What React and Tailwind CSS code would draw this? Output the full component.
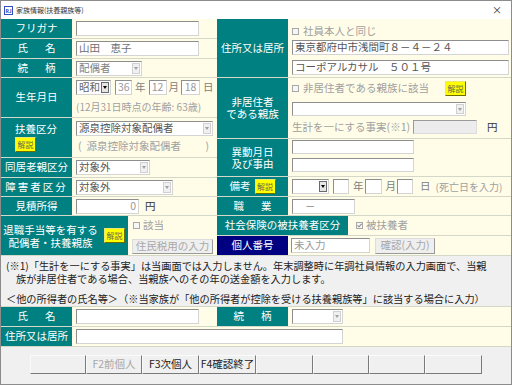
import React from 'react';

const ROW = 'border-b border-[#d3d8c8]';
const CREAM = 'bg-[#fffde8]';

function Lbl({ className = '', bg = 'bg-[#008080]', lead = 'leading-none', children }) {
  return (
    <div className={`${bg} ${lead} text-white text-[10.5px] flex items-center justify-center shrink-0 whitespace-nowrap ${className}`}>
      {children}
    </div>
  );
}

function Spaced({ a, b }) {
  return (
    <span className="w-[38px] flex justify-between">
      <span>{a}</span>
      <span>{b}</span>
    </span>
  );
}

function Inp({ className = '', h = 'h-[15px]', textClass = 'text-[#555]', children }) {
  return (
    <div className={`${h} shrink-0 bg-white border border-t-[#8e8e8e] border-l-[#8e8e8e] border-r-[#d4d4d4] border-b-[#d4d4d4] text-[10.5px] leading-none flex items-center px-[2px] whitespace-nowrap ${textClass} ${className}`}>
      {children}
    </div>
  );
}

function Sel({ className = '', h = 'h-[15px]', dark = false, textClass = 'text-[#555]', children }) {
  return (
    <div className={`${h} shrink-0 bg-white border border-t-[#8e8e8e] border-l-[#8e8e8e] border-r-[#d4d4d4] border-b-[#d4d4d4] flex items-stretch ${className}`}>
      <div className={`flex-1 text-[10.5px] leading-none flex items-center pl-[2px] whitespace-nowrap ${textClass}`}>{children}</div>
      <div className={`w-[8px] my-[1px] mr-[1px] flex items-center justify-center ${dark ? 'bg-[#e6e6e6] border border-[#6a6a6a]' : 'bg-[#f0f0f0] border border-[#d0d0d0]'}`}>
        <div className={`w-0 h-0 border-l-[2px] border-r-[2px] border-t-[3px] border-l-transparent border-r-transparent ${dark ? 'border-t-black' : 'border-t-[#a0a0a0]'}`} />
      </div>
    </div>
  );
}

function Kai({ className = '' }) {
  return (
    <div className={`w-[21px] h-[15px] shrink-0 bg-[#ffff00] border border-t-[#e8e870] border-l-[#e8e870] border-r-[#6e6e00] border-b-[#6e6e00] text-[8px] leading-none text-[#6a6a50] flex items-center justify-center ${className}`}>
      解説
    </div>
  );
}

function Chk({ checked = false }) {
  return (
    <span className="w-[7px] h-[7px] shrink-0 border border-[#a8a8a8] bg-[#f6f6f6] flex items-center justify-center">
      {checked && (
        <svg width="5" height="5" viewBox="0 0 5 5">
          <path d="M0.5 2.3 L2 3.8 L4.6 0.8" stroke="#8a8a8a" strokeWidth="1.1" fill="none" />
        </svg>
      )}
    </span>
  );
}

function GBtn({ className = '', h = 'h-[15px]', children }) {
  return (
    <div className={`${h} shrink-0 bg-[#efefef] border border-t-[#dcdcdc] border-l-[#dcdcdc] border-r-[#9a9a9a] border-b-[#9a9a9a] text-[10.5px] leading-none text-[#a8a8a8] flex items-center justify-center whitespace-nowrap ${className}`}>
      {children}
    </div>
  );
}

function FBtn({ className = '', children, disabled = false }) {
  return (
    <div className={`h-[19px] shrink-0 bg-[#f0f0f0] border border-t-[#fafafa] border-l-[#fafafa] border-r-[#7a7a7a] border-b-[#7a7a7a] text-[10.5px] leading-none flex items-center justify-center whitespace-nowrap ${disabled ? 'text-[#a8a8a8]' : 'text-[#222]'} ${className}`}>
      {children}
    </div>
  );
}

export default function App() {
  return (
    <div className="w-[512px] h-[385px] bg-[#f0f0f0] border border-[#8c8c8c] flex flex-col overflow-hidden font-['Noto_Sans_CJK_JP',sans-serif]">
      {/* title bar */}
      <div className="h-[18px] shrink-0 bg-white flex items-center">
        <div className="ml-[3px] w-[9px] h-[9px] border border-[#3050c0] bg-white text-[5px] leading-none text-[#2040b0] flex items-center justify-center font-bold">RJ</div>
        <span className="ml-[3px] text-[7px] leading-none text-[#333]">家族情報(扶養親族等)</span>
        <span className="ml-auto mr-[9px] text-[10px] leading-none text-[#333]">×</span>
      </div>

      {/* top section */}
      <div className="flex h-[237px] shrink-0">
        {/* left column */}
        <div className="w-[216px] shrink-0 flex flex-col">
          <div className={`flex h-[20px] ${ROW}`}>
            <Lbl className="w-[71px]">フリガナ</Lbl>
            <div className={`flex-1 ${CREAM} flex items-center pl-[4px]`}>
              <Inp className="w-[123px]" />
            </div>
          </div>
          <div className={`flex h-[20px] ${ROW}`}>
            <Lbl className="w-[71px]"><Spaced a="氏" b="名" /></Lbl>
            <div className={`flex-1 ${CREAM} flex items-center pl-[4px]`}>
              <Inp className="w-[123px]" textClass="text-[#707070]">山田　恵子</Inp>
            </div>
          </div>
          <div className={`flex h-[19px] ${ROW}`}>
            <Lbl className="w-[71px]"><Spaced a="続" b="柄" /></Lbl>
            <div className={`flex-1 ${CREAM} flex items-center pl-[4px]`}>
              <Sel className="w-[66px]" textClass="text-[#808080]">配偶者</Sel>
            </div>
          </div>
          <div className={`flex h-[40px] ${ROW}`}>
            <Lbl className="w-[71px]">生年月日</Lbl>
            <div className={`flex-1 ${CREAM} flex flex-col pl-[4px] pt-[2px]`}>
              <div className="flex items-center h-[15px] text-[10.5px] leading-none text-[#808080]">
                <Sel dark className="w-[35px]" textClass="text-[#666]">昭和</Sel>
                <Inp className="w-[17px] ml-[4px]" textClass="text-[#999]">36</Inp>
                <span className="ml-[3px]">年</span>
                <Inp className="w-[18px] ml-[3px] justify-center" textClass="text-[#999]">12</Inp>
                <span className="ml-[2px]">月</span>
                <Inp className="w-[19px] ml-[2px] justify-center" textClass="text-[#999]">18</Inp>
                <span className="ml-[3px]">日</span>
              </div>
              <div className="mt-[5px] h-[13px] flex items-center text-[10px] text-[#a0a0a0] leading-none whitespace-nowrap">(12月31日時点の年齢: 63歳)</div>
            </div>
          </div>
          <div className={`flex h-[40px] ${ROW}`}>
            <div className="w-[71px] shrink-0 bg-[#008080] text-white text-[10.5px] leading-none flex flex-col justify-center pl-[14px]">
              <span className="h-[13px] flex items-center">扶養区分</span>
              <Kai className="mt-[1px]" />
            </div>
            <div className={`flex-1 ${CREAM} flex flex-col pl-[4px] pt-[3px]`}>
              <Sel className="w-[137px]" textClass="text-[#555]">源泉控除対象配偶者</Sel>
              <div className="mt-[3px] h-[14px] w-[131px] ml-[2px] flex items-center justify-between text-[10.5px] text-[#a0a0a0] leading-none whitespace-nowrap">
                <span>(<span className="ml-[5px]">源泉控除対象配偶者</span></span>
                <span>)</span>
              </div>
            </div>
          </div>
          <div className={`flex h-[20px] ${ROW}`}>
            <Lbl className="w-[71px]">同居老親区分</Lbl>
            <div className={`flex-1 ${CREAM} flex items-center pl-[4px]`}>
              <Sel className="w-[74px]">対象外</Sel>
            </div>
          </div>
          <div className={`flex h-[19px] ${ROW}`}>
            <Lbl className="w-[71px] tracking-[2px]">障害者区分</Lbl>
            <div className={`flex-1 ${CREAM} flex items-center pl-[4px]`}>
              <Sel className="w-[97px]">対象外</Sel>
            </div>
          </div>
          <div className={`flex h-[19px] ${ROW}`}>
            <Lbl className="w-[71px]">見積所得</Lbl>
            <div className={`flex-1 ${CREAM} flex items-center pl-[4px] text-[10.5px] leading-none text-[#333]`}>
              <Inp className="w-[63px] justify-end" textClass="text-[#999]">0</Inp>
              <span className="ml-[6px]">円</span>
            </div>
          </div>
          <div className={`flex h-[40px] ${ROW}`}>
            <div className="w-[127px] shrink-0 bg-[#008080] text-white text-[10.5px] flex items-center whitespace-nowrap">
              <div className="w-[97px] ml-[1px] flex flex-col items-center leading-[13px]">
                <span className="h-[13px]">退職手当等を有する</span>
                <span className="h-[13px]">配偶者・扶養親族</span>
              </div>
              <Kai className="ml-[5px]" />
            </div>
            <div className={`flex-1 ${CREAM} flex flex-col pl-[4px] pt-[2px]`}>
              <div className="h-[14px] ml-[1px] flex items-center gap-[3px] text-[#a0a0a0] text-[10.5px] leading-none">
                <Chk />該当
              </div>
              <GBtn className="w-[81px] mt-[7px]">住民税用の入力</GBtn>
            </div>
          </div>
        </div>

        {/* right column */}
        <div className="flex-1 flex flex-col">
          <div className={`flex h-[59px] ${ROW}`}>
            <Lbl className="w-[71px]">住所又は居所</Lbl>
            <div className={`flex-1 ${CREAM} flex flex-col pl-[4px] pt-[5px]`}>
              <div className="h-[14px] flex items-center gap-[4px] text-[10.5px] text-[#a0a0a0] leading-none">
                <Chk />社員本人と同じ
              </div>
              <Inp className="w-[217px] mt-[2px]">東京都府中市浅間町８－４－２４</Inp>
              <Inp className="w-[217px] mt-[5px]">コーポアルカサル　５０１号</Inp>
            </div>
          </div>
          <div className={`flex h-[61px] ${ROW}`}>
            <Lbl className="w-[71px] flex-col" lead="leading-[12px]">
              <span className="h-[12px]">非居住者</span>
              <span className="h-[12px]">である親族</span>
            </Lbl>
            <div className={`flex-1 ${CREAM} flex flex-col pl-[4px] pt-[3px]`}>
              <div className="w-[174px] h-[15px] flex items-center">
                <Chk />
                <span className="ml-[4px] text-[#a0a0a0] text-[10.5px] leading-none">非居住者である親族に該当</span>
                <Kai className="ml-auto" />
              </div>
              <Sel className="w-[174px] mt-[6px]" h="h-[14px]" />
              <div className="flex items-center mt-[4px] h-[14px] text-[10.5px] leading-none">
                <span className="w-[121px] text-[#a0a0a0] whitespace-nowrap">生計を一にする事実(※1)</span>
                <div className="w-[64px] h-[14px] bg-[#ececec] border border-t-[#9a9a9a] border-l-[#9a9a9a] border-r-[#dcdcdc] border-b-[#dcdcdc]" />
                <span className="ml-[10px] text-[#333]">円</span>
              </div>
            </div>
          </div>
          <div className={`flex h-[38px] ${ROW}`}>
            <Lbl className="w-[71px] flex-col" lead="leading-[12px]">
              <span className="h-[12px]">異動月日</span>
              <span className="h-[12px]">及び事由</span>
            </Lbl>
            <div className={`flex-1 ${CREAM} flex flex-col pl-[4px] pt-[1px] gap-[4px]`}>
              <Inp className="w-[122px]" h="h-[14px]" />
              <Inp className="w-[122px]" h="h-[14px]" />
            </div>
          </div>
          <div className={`flex h-[20px] ${ROW}`}>
            <Lbl className="w-[71px] gap-[4px]">
              <span>備考</span>
              <Kai />
            </Lbl>
            <div className={`flex-1 ${CREAM} flex items-center pl-[4px] text-[10.5px] leading-none text-[#808080] whitespace-nowrap`}>
              <Sel dark className="w-[37px]" />
              <Inp className="w-[16px] ml-[4px]" />
              <span className="ml-[4px]">年</span>
              <Inp className="w-[17px] ml-[1px]" />
              <span className="ml-[4px]">月</span>
              <Inp className="w-[16px] ml-[1px]" />
              <span className="ml-[7px]">日</span>
              <span className="ml-[5px] text-[10px] text-[#a0a0a0]">(死亡日を入力)</span>
            </div>
          </div>
          <div className={`flex h-[19px] ${ROW}`}>
            <Lbl className="w-[71px]"><Spaced a="職" b="業" /></Lbl>
            <div className={`flex-1 ${CREAM} flex items-center pl-[4px]`}>
              <Inp className="w-[63px]" textClass="text-[#888]"><span className="ml-[10px]">－</span></Inp>
            </div>
          </div>
          <div className={`flex h-[20px] ${ROW}`}>
            <Lbl className="w-[131px]">社会保険の被扶養者区分</Lbl>
            <div className={`flex-1 ${CREAM} flex items-center pl-[8px] gap-[3px] text-[10.5px] leading-none text-[#a0a0a0]`}>
              <Chk checked />被扶養者
            </div>
          </div>
          <div className={`flex h-[20px] ${ROW}`}>
            <Lbl className="w-[71px]" bg="bg-[#000080]">個人番号</Lbl>
            <div className={`flex-1 ${CREAM} flex items-center pl-[3px]`}>
              <Inp className="w-[79px]" textClass="text-[#999]">未入力</Inp>
              <GBtn className="w-[60px] ml-[5px]" h="h-[16px]">確認(入力)</GBtn>
            </div>
          </div>
        </div>
      </div>

      {/* notes */}
      <div className="h-[50px] shrink-0 text-[10.2px] text-[#222] pl-[5px] pt-[3px] whitespace-nowrap">
        <p className="h-[13px] leading-[13px]">(※1)「生計を一にする事実」は当画面では入力しません。年末調整時に年調社員情報の入力画面で、当親</p>
        <p className="h-[13px] leading-[13px] pl-[10px]">族が非居住者である場合、当親族へのその年の送金額を入力します。</p>
        <p className="mt-[7px] h-[13px] leading-[13px]">＜他の所得者の氏名等＞（※当家族が「他の所得者が控除を受ける扶養親族等」に該当する場合に入力）</p>
      </div>

      {/* bottom rows */}
      <div className="flex h-[21px] shrink-0 border-t border-b border-[#d3d8c8]">
        <Lbl className="w-[71px]"><Spaced a="氏" b="名" /></Lbl>
        <div className={`w-[145px] shrink-0 ${CREAM} flex items-center pl-[4px]`}>
          <Inp className="w-[123px]" />
        </div>
        <Lbl className="w-[71px]"><Spaced a="続" b="柄" /></Lbl>
        <div className={`flex-1 ${CREAM} flex items-center pl-[4px]`}>
          <Sel className="w-[51px]" />
        </div>
      </div>
      <div className="flex h-[20px] shrink-0 border-b border-[#d3d8c8]">
        <Lbl className="w-[71px]">住所又は居所</Lbl>
        <div className={`flex-1 ${CREAM} flex items-center pl-[4px]`}>
          <Inp className="w-[267px]" />
        </div>
      </div>

      {/* function buttons */}
      <div className="flex pl-[29px] mt-[8px]">
        <FBtn className="w-[56px]" />
        <FBtn className="w-[56px]" disabled>F2前個人</FBtn>
        <FBtn className="w-[57px]">F3次個人</FBtn>
        <FBtn className="w-[57px]">F4確認終了</FBtn>
        <FBtn className="w-[57px]" />
        <FBtn className="w-[56px]" />
        <FBtn className="w-[56px]" />
        <FBtn className="w-[57px]" />
      </div>
    </div>
  );
}
